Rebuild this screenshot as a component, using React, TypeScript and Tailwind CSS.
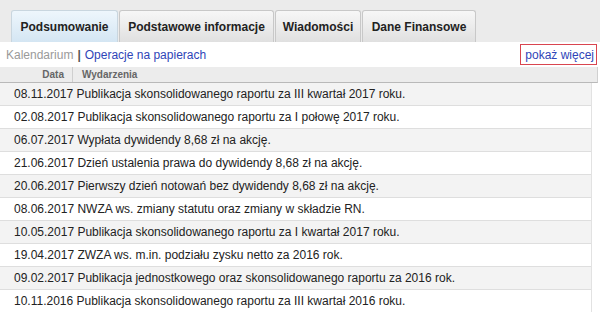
import { FC } from 'react'

const tabs = [
  { label: 'Podsumowanie', w: 'w-[107px]' },
  { label: 'Podstawowe informacje', w: 'w-[155px]' },
  { label: 'Wiadomości', w: 'w-[86px]' },
  { label: 'Dane Finansowe', w: 'w-[114px]' },
]

const events = [
  '08.11.2017 Publikacja skonsolidowanego raportu za III kwartał 2017 roku.',
  '02.08.2017 Publikacja skonsolidowanego raportu za I połowę 2017 roku.',
  '06.07.2017 Wypłata dywidendy 8,68 zł na akcję.',
  '21.06.2017 Dzień ustalenia prawa do dywidendy 8,68 zł na akcję.',
  '20.06.2017 Pierwszy dzień notowań bez dywidendy 8,68 zł na akcję.',
  '08.06.2017 NWZA ws. zmiany statutu oraz zmiany w składzie RN.',
  '10.05.2017 Publikacja skonsolidowanego raportu za I kwartał 2017 roku.',
  '19.04.2017 ZWZA ws. m.in. podziału zysku netto za 2016 rok.',
  '09.02.2017 Publikacja jednostkowego oraz skonsolidowanego raportu za 2016 rok.',
  '10.11.2016 Publikacja skonsolidowanego raportu za III kwartał 2016 roku.',
]

const Tabs: FC = () => (
  <div className="flex h-[42px] items-end gap-[1px] bg-[#ebebeb] pl-[11px]">
    {tabs.map((t, i) => (
      <div
        key={t.label}
        className={`${t.w} ${
          i === 0
            ? 'flex h-[32px] items-center justify-center rounded-t-[3px] border border-b-0 border-[#c9d6df] bg-gradient-to-b from-[#eef6fc] to-[#d4e6f3] text-[12px] font-bold text-[#222]'
            : 'flex h-[32px] items-center justify-center rounded-t-[3px] border border-b-0 border-[#c8c8c8] bg-gradient-to-b from-[#f7f7f7] to-[#e0e0e0] text-[12px] font-bold text-[#222]'
        }`}
      >
        {t.label}
      </div>
    ))}
  </div>
)

export default function App() {
  return (
    <div className="h-[312px] w-[600px] overflow-hidden bg-white font-['Liberation_Sans',Arial,sans-serif]">
      <Tabs />
      <div className="flex h-[25px] items-center justify-between pl-[6px] pr-[3px] text-[12px]">
        <div className="flex items-center">
          <span className="text-[#9a9a9a]">Kalendarium</span>
          <span className="mx-[4px] font-bold text-[#555]">|</span>
          <span className="text-[#2f45b8]">Operacje na papierach</span>
        </div>
        <span className="flex h-[21px] items-center border border-[#d9454f] pl-[4px] pr-[2px] text-[#2f45b8]">pokaż więcej</span>
      </div>
      <div className="mr-[2px] flex h-[16px] items-center border-b border-b-[#b9b9b9] border-r border-r-[#d0d0d0] bg-[#ececec] text-[10px] font-bold text-[#666]">
        <div className="flex h-full w-[73px] items-center justify-end border-r border-[#cfcfcf] pr-[8px]">Data</div>
        <div className="pl-[9px]">Wydarzenia</div>
      </div>
      <div className="mr-[8px] border-r border-[#e2e2e2]">
        {events.map((e, i) => (
          <div
            key={e}
            className={
              i % 2 === 0
                ? 'flex h-[23px] items-center border-b border-[#dedede] bg-[#f3f3f3] pl-[14px] text-[12px] text-[#222]'
                : 'flex h-[23px] items-center border-b border-[#dedede] bg-white pl-[14px] text-[12px] text-[#222]'
            }
          >
            {e}
          </div>
        ))}
      </div>
    </div>
  )
}
